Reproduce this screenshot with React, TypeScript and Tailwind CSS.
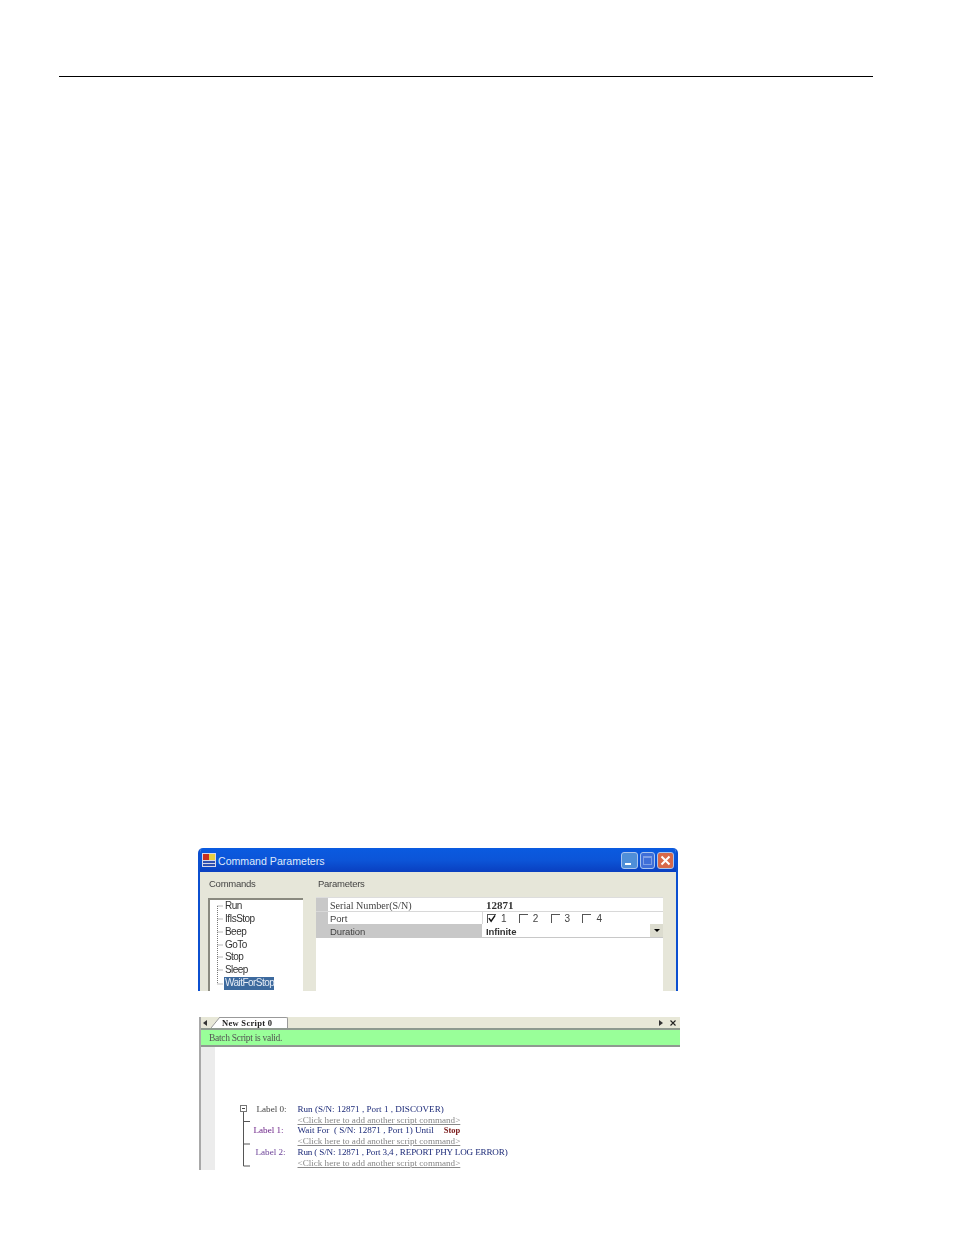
import React from "react";

const commands = ["Run", "IfIsStop", "Beep", "GoTo", "Stop", "Sleep"];

function WindowButton({ tone, width, children }: { tone: string; width: string; children: React.ReactNode }) {
  return (
    <div className={`flex h-[17px] items-center justify-center rounded-[3px] border border-[#a9c4ee] ${width} ${tone}`}>
      {children}
    </div>
  );
}

function AppIcon() {
  return (
    <svg width="14" height="14" viewBox="0 0 14 14" className="shrink-0">
      <rect x="0" y="0" width="14" height="14" fill="#d8d8e8" />
      <rect x="1" y="1" width="6" height="6" fill="#c83020" />
      <rect x="7" y="1" width="6" height="6" fill="#e8d040" />
      <rect x="1" y="8" width="12" height="2" fill="#3050b0" />
      <rect x="1" y="11" width="12" height="2" fill="#3050b0" />
    </svg>
  );
}

function CommandTree() {
  return (
    <div className="-ml-px flex h-[93px] w-[95px] border-l-2 border-t-2 border-[#8a8a80] bg-white">
      <svg width="14" height="91" viewBox="0 0 14 91" className="shrink-0">
        <path
          d="M7.5 6V84M7.5 6H13M7.5 19H13M7.5 32H13M7.5 45H13M7.5 57H13M7.5 70H13M7.5 84H13"
          stroke="#777"
          strokeDasharray="1 1"
          fill="none"
        />
      </svg>
      <div className="flex flex-col font-['Liberation_Sans',sans-serif] text-[10px] leading-[12.85px] tracking-[-0.55px] text-[#333]">
        {commands.map((c) => (
          <div key={c} className="pl-px">{c}</div>
        ))}
        <div className="w-[50px] bg-[#3d6a9e] pl-px whitespace-nowrap text-[#e6ecf5]">WaitForStop</div>
      </div>
    </div>
  );
}

function PortCheck({ n, checked }: { n: number; checked?: boolean }) {
  return (
    <div className="flex w-[31.8px] items-center gap-[5px]">
      <div className="flex h-[9px] w-[9px] items-center justify-center border-l border-t border-[#555]">
        {checked && (
          <svg width="9" height="9" viewBox="0 0 9 9">
            <path d="M1 4L3.5 7.5L8 1" stroke="#111" strokeWidth="1.6" fill="none" />
          </svg>
        )}
      </div>
      <span>{n}</span>
    </div>
  );
}

function ParameterGrid() {
  return (
    <div className="flex h-[94px] w-[347px] flex-col bg-white">
      <div className="flex h-[14px] border-t border-[#ddd]">
        <div className="w-[12px] bg-[#c8c8c8]" />
        <div className="w-[154px] pl-[2px] pt-px font-['Liberation_Serif',serif] text-[10.1px] leading-[13px] text-[#444]">Serial Number(S/N)</div>
        <div className="pl-[4px] pt-px font-['Liberation_Serif',serif] text-[11px] leading-[13px] font-bold text-[#333]">12871</div>
      </div>
      <div className="flex h-[13px] border-t border-[#d8d8d8]">
        <div className="w-[12px] bg-[#c8c8c8]" />
        <div className="w-[154px] pl-[2px] pt-px font-['Liberation_Sans',sans-serif] text-[9.5px] leading-[12px] text-[#444]">Port</div>
        <div className="flex items-center border-l border-[#d8d8d8] pl-[4px] font-['Liberation_Sans',sans-serif] text-[10px] text-[#444]">
          <PortCheck n={1} checked />
          <PortCheck n={2} />
          <PortCheck n={3} />
          <PortCheck n={4} />
        </div>
      </div>
      <div className="flex h-[14px] border-b border-[#c8c8c8]">
        <div className="w-[166px] bg-[#c8c8c8] pl-[14px] pt-px font-['Liberation_Sans',sans-serif] text-[9.5px] leading-[13px] tracking-[-0.1px] text-[#444]">Duration</div>
        <div className="flex-1 pl-[4px] pt-px font-['Liberation_Sans',sans-serif] text-[9.5px] leading-[13px] font-bold tracking-[-0.1px] text-[#333]">Infinite</div>
        <div className="flex h-[13px] w-[13px] items-center justify-center bg-[#dcdccf]">
          <div className="h-0 w-0 border-x-[3px] border-t-[3px] border-x-transparent border-t-black" />
        </div>
      </div>
    </div>
  );
}

function CommandWindow() {
  return (
    <div className="ml-[198px] flex h-[143px] w-[480px] flex-col overflow-hidden rounded-t-[5px] border-x-2 border-[#0b4fd0] bg-[#e6e6d9] blur-[0.3px]">
      <div className="flex h-[24px] shrink-0 items-center bg-gradient-to-b from-[#0a5be0] via-[#0c55d8] to-[#0a3fc0] pl-[2px] pr-[2px]">
        <AppIcon />
        <span className="mt-[3px] ml-[2px] font-['Liberation_Sans',sans-serif] text-[10.6px] text-[#dfe9fa]">Command Parameters</span>
        <div className="ml-auto flex gap-[2px]">
          <WindowButton tone="bg-[#4f8fd8]" width="w-[17px]">
            <div className="mt-[8px] mr-[4px] h-[2px] w-[6px] bg-white" />
          </WindowButton>
          <WindowButton tone="bg-[#3f6fd8]" width="w-[15px]">
            <div className="h-[9px] w-[9px] border border-t-2 border-[#7f9fe5]" />
          </WindowButton>
          <WindowButton tone="bg-[#d8694a]" width="w-[17px]">
            <svg width="11" height="11" viewBox="0 0 11 11">
              <path d="M1.5 1.5L9.5 9.5M9.5 1.5L1.5 9.5" stroke="#fff" strokeWidth="2" />
            </svg>
          </WindowButton>
        </div>
      </div>
      <div className="flex flex-1 pl-[9px] font-['Liberation_Sans',sans-serif] text-[9.5px] tracking-[-0.25px] text-[#444]">
        <div className="w-[109px] shrink-0">
          <div className="pt-[6px] pb-[8px] leading-[12px]">Commands</div>
          <CommandTree />
        </div>
        <div className="shrink-0">
          <div className="pt-[6px] pb-[7px] leading-[12px]">Parameters</div>
          <div className="-ml-[2px] tracking-normal">
            <ParameterGrid />
          </div>
        </div>
      </div>
    </div>
  );
}

const addLink = "<Click here to add another script command>";

function ScriptRow({ label, labelClass, children }: { label: string; labelClass: string; children: React.ReactNode }) {
  return (
    <div className="flex h-[21.4px] flex-col">
      <div className="flex h-[11px] items-center text-[9.1px] leading-[11px]">
        <div className={`w-[43px] shrink-0 ${labelClass}`}>{label}</div>
        <div className="whitespace-nowrap text-[#1c2a78]">{children}</div>
      </div>
      <div className="ml-[43px] whitespace-nowrap text-[9.1px] leading-[10px] text-[#888] underline">{addLink}</div>
    </div>
  );
}

function ScriptTree() {
  return (
    <svg width="16" height="66" viewBox="0 0 16 66" className="shrink-0">
      <rect x="0.5" y="1.5" width="6" height="6" fill="#fff" stroke="#777" />
      <path d="M2 4.5H5" stroke="#444" />
      <path d="M3.5 8V62M3.5 17.5H10M3.5 40H10M3.5 62H10" stroke="#555" fill="none" />
    </svg>
  );
}

function ScriptPanel() {
  return (
    <div className="mt-[26px] ml-[199px] flex h-[153px] w-[481px] flex-col overflow-hidden border-l-2 border-[#a8a8a8] bg-white font-['Liberation_Serif',serif] blur-[0.25px]">
      <div className="flex h-[11px] shrink-0 items-end bg-[#e8e8d8]">
        <div className="flex h-[11px] w-[6px] items-center justify-end">
          <div className="h-0 w-0 border-y-[3px] border-r-[4px] border-y-transparent border-r-[#333]" />
        </div>
        <svg width="9" height="11" viewBox="0 0 9 11" className="ml-[4px] shrink-0">
          <path d="M0 11L9 0V11Z" fill="#fff" />
          <path d="M0 11L9 0" stroke="#999" fill="none" />
        </svg>
        <div className="h-[11px] w-[68px] rounded-tr-[2px] border-r border-t border-[#999] bg-white pl-[2px] font-['Liberation_Serif',serif] text-[8.5px] leading-[10px] font-bold tracking-[0.3px] text-[#222]">
          New Script 0
        </div>
        <div className="ml-auto flex h-[11px] items-center gap-[7px] pr-[4px]">
          <div className="h-0 w-0 border-y-[3px] border-l-[4px] border-y-transparent border-l-[#333]" />
          <svg width="6" height="6" viewBox="0 0 6 6">
            <path d="M0.5 0.5L5.5 5.5M5.5 0.5L0.5 5.5" stroke="#222" strokeWidth="1.1" />
          </svg>
        </div>
      </div>
      <div className="h-[19px] shrink-0 border-y-2 border-[#8f9a90] bg-[#99ff99] pl-[8px] text-[9.5px] leading-[16px] tracking-[-0.3px] text-[#555]">
        Batch Script is valid.
      </div>
      <div className="flex flex-1">
        <div className="w-[14px] shrink-0 bg-[#ececec]" />
        <div className="flex flex-1 pl-[25px] pt-[57px]">
          <ScriptTree />
          <div className="-ml-[1.5px] flex-1">
            <ScriptRow label="Label 0:" labelClass="pl-[2px] text-[#444]">
              Run (S/N: 12871 , Port 1 , DISCOVER)
            </ScriptRow>
            <ScriptRow label="Label 1:" labelClass="-ml-[1px] w-[44px] text-[#6a1f86]">
              Wait For&nbsp; ( S/N: 12871 , Port 1) Until
              <span className="ml-[10px] text-[8.5px] font-bold text-[#7a1a1a]">Stop</span>
            </ScriptRow>
            <ScriptRow label="Label 2:" labelClass="pl-px text-[#6a3f96]">
              <span className="tracking-[-0.15px]">Run ( S/N: 12871 , Port 3,4 , REPORT PHY LOG ERROR)</span>
            </ScriptRow>
          </div>
        </div>
      </div>
    </div>
  );
}

export default function App() {
  return (
    <div className="h-[1235px] w-[954px] overflow-hidden bg-white pt-[76px]">
      <div className="ml-[59px] h-[1px] w-[814px] bg-black" />
      <div className="h-[771px]" />
      <CommandWindow />
      <ScriptPanel />
    </div>
  );
}
